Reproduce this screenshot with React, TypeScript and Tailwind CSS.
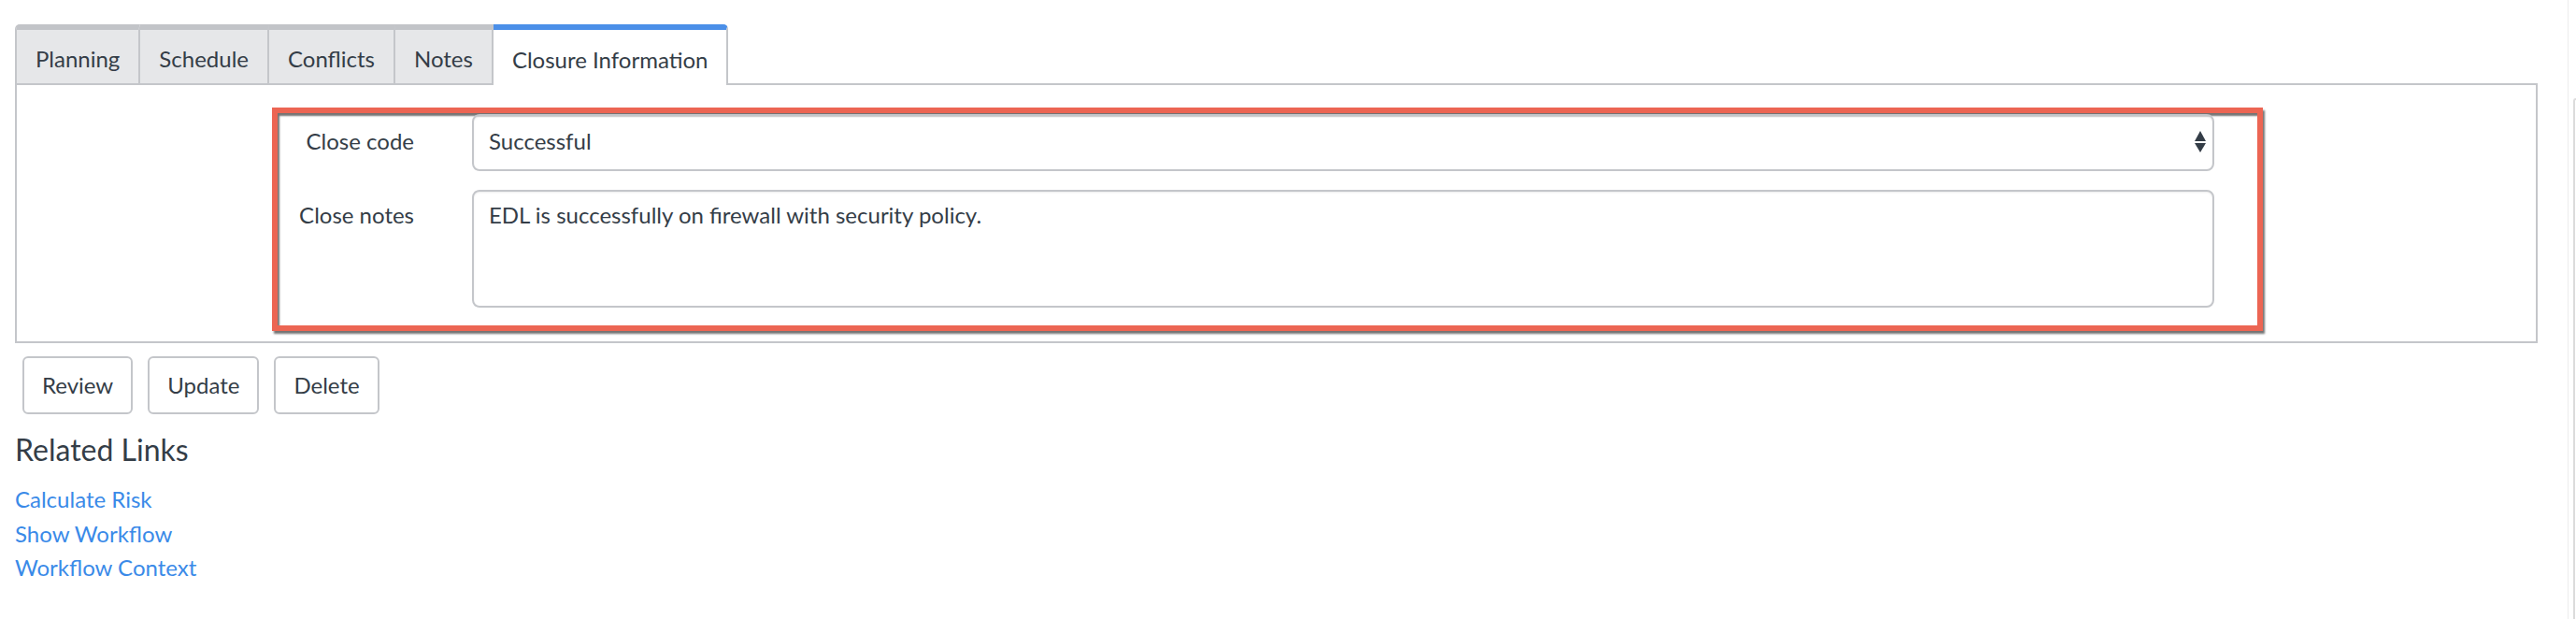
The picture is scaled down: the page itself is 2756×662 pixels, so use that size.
import React from 'react';

const tabs = ['Planning', 'Schedule', 'Conflicts', 'Notes', 'Closure Information'];
const links = ['Calculate Risk', 'Show Workflow', 'Workflow Context'];

const App: React.FC = () => {
  return (
    <div className="flex w-full h-[662px] bg-white text-[#343d47] font-['Lato',sans-serif] text-[24px] overflow-hidden">
      <div className="flex-1 pl-[16px] pr-[32px] pt-[26px]">
        {/* Tabs */}
        <div className="flex items-start relative z-10">
          {tabs.map((t, i) => {
            const active = t === 'Closure Information';
            return (
              <div
                key={t}
                className={
                  active
                    ? 'h-[65px] -mb-[2px] px-[20px] pt-[4px] flex items-center bg-white border-t-[6px] border-t-[#4b8fe8] border-r-2 border-r-[#c4c6ca] rounded-tr-[5px] leading-[30px]'
                    : `h-[63px] px-[20px] pt-[4px] flex items-center bg-[#e6e7e9] border-t-[6px] border-t-[#c2c4c8] border-r-2 border-r-[#c4c6ca] leading-[30px] ${i === 0 ? 'border-l-2 border-l-[#c4c6ca] rounded-tl-[5px]' : ''}`
                }
              >
                {t}
              </div>
            );
          })}
        </div>

        {/* Tab panel */}
        <div className="border-2 border-[#c4c6ca] pt-[24px] pb-[11px]">
          <div className="ml-[273px] mr-[292px] border-[6px] border-[#ec6553] pt-[1px] pb-[19px] pr-[46px] shadow-[2px_3px_2px_rgba(0,0,0,0.55),inset_2px_3px_2px_rgba(0,0,0,0.55)] flex flex-col gap-[20px]">
            <div className="flex">
              <div className="w-[208px] pr-[62px] pt-[14px] text-right leading-[30px] shrink-0">Close code</div>
              <div className="flex-1 h-[61px] border-2 border-[#c4c6ca] rounded-[8px] pl-[16px] pr-[7px] flex items-center justify-between leading-[30px] shadow-[inset_0_1px_2px_rgba(0,0,0,0.08)]">
                <span className="-mt-[4px]">Successful</span>
                <svg width="12" height="23" viewBox="0 0 12 23" className="-mt-[2px]">
                  <polygon points="6,0 12,11 0,11" fill="#343d47" />
                  <polygon points="0,13 12,13 6,23" fill="#343d47" />
                </svg>
              </div>
            </div>
            <div className="flex">
              <div className="w-[208px] pr-[62px] pt-[12px] text-right leading-[30px] shrink-0">Close notes</div>
              <div className="flex-1 h-[126px] border-2 border-[#c4c6ca] rounded-[8px] pl-[16px] pt-[10px] leading-[30px] shadow-[inset_0_1px_2px_rgba(0,0,0,0.08)]">
                EDL is successfully on firewall with security policy.
              </div>
            </div>
          </div>
        </div>

        {/* Actions */}
        <div className="flex gap-[16px] ml-[8px] mt-[14px]">
          {['Review', 'Update', 'Delete'].map(b => (
            <button key={b} className="h-[62px] px-[19px] border-2 border-[#c4c6ca] rounded-[6px] bg-white leading-[30px] text-[#343d47]">
              {b}
            </button>
          ))}
        </div>

        {/* Related links */}
        <h2 className="mt-[19px] text-[32px] leading-[38px]">Related Links</h2>
        <div className="mt-[16px] flex flex-col">
          {links.map(l => (
            <a key={l} className="text-[#3a8ae8] leading-[36.5px] w-fit">{l}</a>
          ))}
        </div>
      </div>

      {/* Scrollbar */}
      <div className="w-[9px] border-l border-[#ececec] flex flex-col">
        <div className="mt-[105px] ml-[5px] flex-1 border-l-2 border-t-2 border-[#dcdcdc] rounded-tl-[6px]" />
      </div>
    </div>
  );
};

export default App;
